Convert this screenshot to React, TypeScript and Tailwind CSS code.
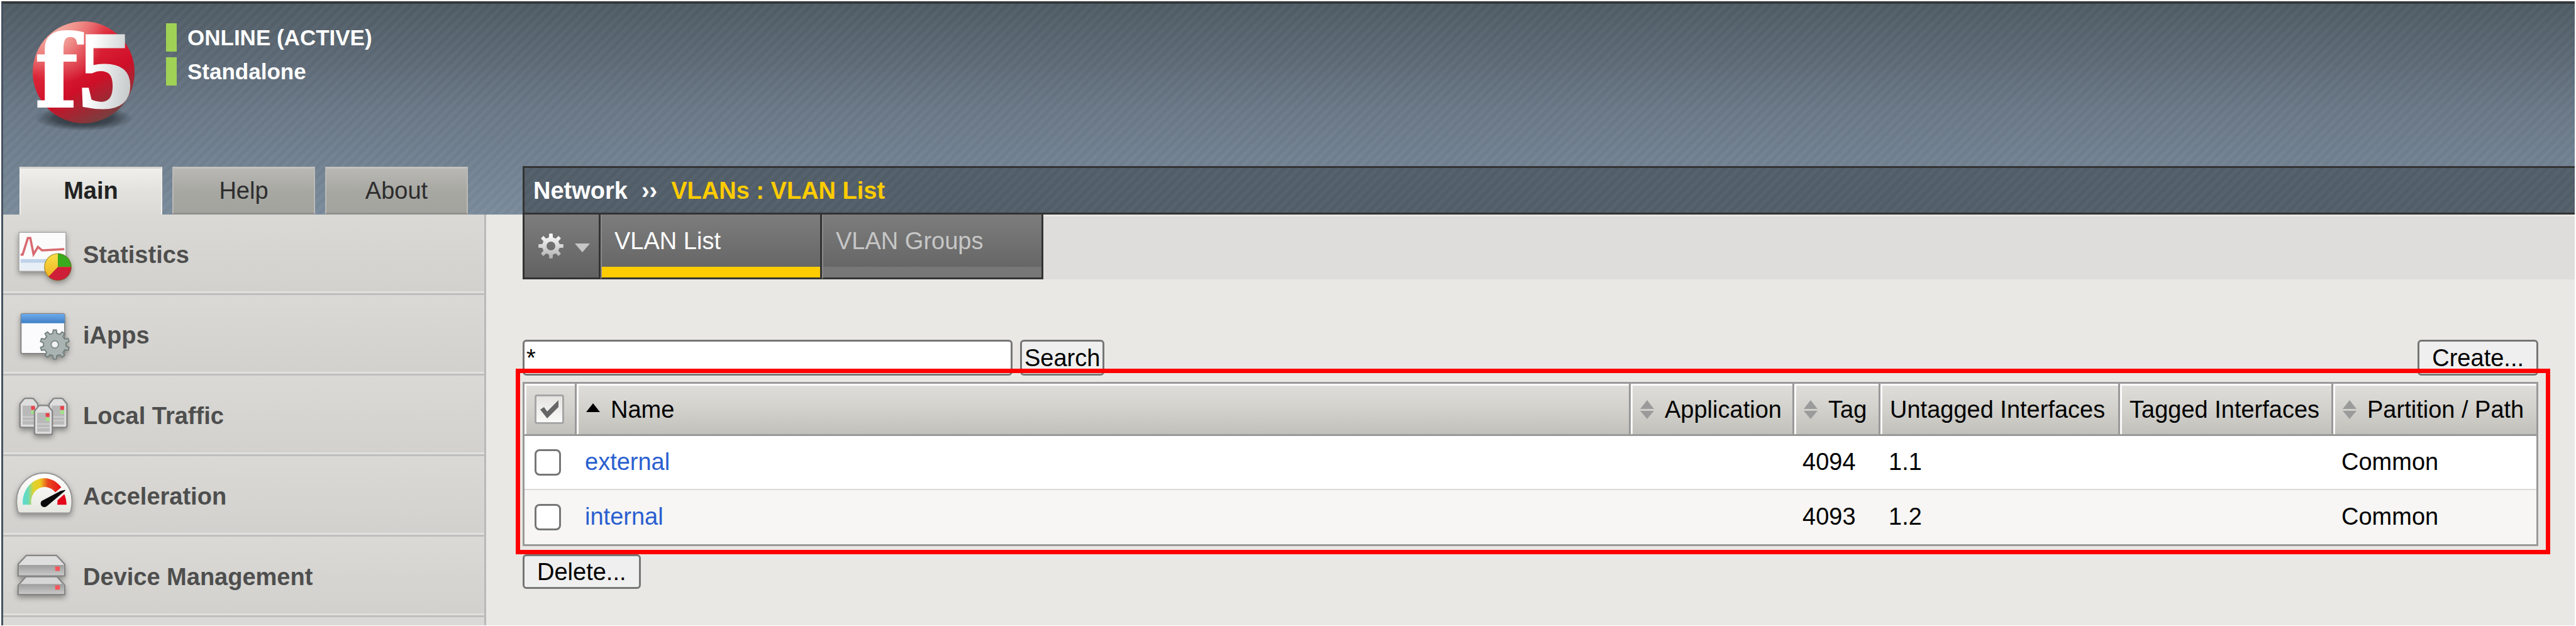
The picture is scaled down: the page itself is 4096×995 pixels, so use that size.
import React from "react";

function gearPath(cx: number, cy: number, outer: number, inner: number, teeth: number, hole: number) {
  const step = (Math.PI * 2) / teeth;
  const point = (r: number, a: number) => `${(cx + r * Math.sin(a)).toFixed(1)} ${(cy - r * Math.cos(a)).toFixed(1)}`;
  let d = "";
  for (let i = 0; i < teeth; i++) {
    const a = i * step;
    d += `${i === 0 ? "M" : "L"}${point(inner, a - step * 0.28)} L${point(outer, a - step * 0.17)} L${point(outer, a + step * 0.17)} L${point(inner, a + step * 0.28)} `;
  }
  d += `Z M${cx + hole} ${cy} A${hole} ${hole} 0 1 0 ${cx - hole} ${cy} A${hole} ${hole} 0 1 0 ${cx + hole} ${cy} Z`;
  return d;
}

const SHADOW = "drop-shadow-[0_4px_4px_rgba(0,0,0,0.35)]";
const ICON = "h-[122px] w-24 shrink-0 " + SHADOW;

function StatisticsIcon() {
  return (
    <svg viewBox="75 10 298 379" className={ICON} aria-hidden="true">
      <defs>
        <linearGradient id="pieYellow" x1="0" y1="0" x2="0" y2="1">
          <stop offset="0" stopColor="#f8e04a" />
          <stop offset="1" stopColor="#eeac1c" />
        </linearGradient>
      </defs>
      <rect x="94" y="98" width="232" height="192" fill="#fbfbfc" stroke="#a2a2a2" strokeWidth="4" />
      <rect x="100" y="232" width="220" height="54" fill="#e9eff6" />
      <rect x="102" y="230" width="130" height="18" fill="#bfd3ea" />
      <path d="M102 208 H112 L138 126 H150 L166 206 L188 170 L208 187 L318 181" fill="none" stroke="#d8696f" strokeWidth="11" />
      <circle cx="286" cy="269" r="67" fill="url(#pieYellow)" />
      <path d="M286 269 V202 A67 67 0 0 1 353 269 Z" fill="#3aab1c" />
      <path d="M286 269 H353 A67 67 0 0 1 240 317 Z" fill="#cf1f38" />
      <circle cx="286" cy="269" r="66" fill="none" stroke="#5a4a20" strokeOpacity="0.45" strokeWidth="4" />
    </svg>
  );
}

function IAppsIcon() {
  return (
    <svg viewBox="75 408 298 379" className={ICON} aria-hidden="true">
      <defs>
        <linearGradient id="winBlue" x1="0" y1="0" x2="0" y2="1">
          <stop offset="0" stopColor="#6cacec" />
          <stop offset="1" stopColor="#3f7fc4" />
        </linearGradient>
      </defs>
      <rect x="104" y="500" width="216" height="197" rx="8" fill="#fbfbfd" stroke="#858585" strokeWidth="6" />
      <path d="M104 547 V510 Q104 501 113 501 H311 Q320 501 320 510 V547 Z" fill="url(#winBlue)" />
      <path d={gearPath(271, 652, 72, 56, 10, 18)} fill="#a9b4b2" stroke="#74807e" strokeWidth="6" fillRule="evenodd" />
      <circle cx="271" cy="652" r="17" fill="#f2f2f4" stroke="#8a9694" strokeWidth="4" />
    </svg>
  );
}

function Tower({ x, y }: { x: number; y: number }) {
  return (
    <g>
      <path
        d={`M${x} ${y + 28} L${x + 20} ${y + 3} Q${x + 24} ${y} ${x + 30} ${y} H${x + 58} Q${x + 64} ${y} ${x + 68} ${y + 3} L${x + 88} ${y + 28} V${y + 136} Q${x + 88} ${y + 144} ${x + 80} ${y + 144} H${x + 8} Q${x} ${y + 144} ${x} ${y + 136} Z`}
        fill="#dedede"
        stroke="#848484"
        strokeWidth="7"
      />
      <rect x={x + 13} y={y + 36} width="62" height="94" fill="#b9b9b9" />
      <path d={`M${x + 13} ${y + 92} H${x + 75} M${x + 13} ${y + 110} H${x + 75}`} stroke="#d2d2d2" strokeWidth="5" />
      <rect x={x + 55} y={y + 38} width="19" height="19" fill="#e8444a" />
      <rect x={x + 55} y={y + 60} width="19" height="17" fill="#a2e286" />
    </g>
  );
}

function LocalTrafficIcon() {
  return (
    <svg viewBox="75 -64 298 379" className={ICON} aria-hidden="true">
      <Tower x={99} y={48} />
      <Tower x={243} y={48} />
      <Tower x={171} y={83} />
    </svg>
  );
}

function AccelerationIcon() {
  return (
    <svg viewBox="75 334 298 379" className={ICON} aria-hidden="true">
      <defs>
        <linearGradient id="dial" x1="0" y1="0" x2="1" y2="0">
          <stop offset="0" stopColor="#58dcd0" />
          <stop offset="0.14" stopColor="#6cd9b8" />
          <stop offset="0.28" stopColor="#dfd32c" />
          <stop offset="0.45" stopColor="#eccb22" />
          <stop offset="0.65" stopColor="#e84a1e" />
          <stop offset="1" stopColor="#e6101c" />
        </linearGradient>
        <linearGradient id="dialFace" x1="0" y1="0" x2="0" y2="1">
          <stop offset="0" stopColor="#ffffff" />
          <stop offset="1" stopColor="#e6e6e0" />
        </linearGradient>
      </defs>
      <path d="M98 615 Q90 615 87 600 Q82 582 82 554 A137 137 0 0 1 356 554 Q356 582 351 600 Q348 615 340 615 Z" fill="url(#dialFace)" stroke="#979797" strokeWidth="6" />
      <path d="M113 574 A107 120 0 0 1 303 488 L274 513 A68 74 0 0 0 155 574 Z" fill="url(#dial)" />
      <path d="M283 574 Q285 556 284 552 L318 522 Q328 544 329 574 Z" fill="#e3071b" />
      <path d="M324 500 Q322 506 314 512 L233 580 A18 18 0 1 1 206 555 L300 506 Z" fill="#0a0a0a" />
    </svg>
  );
}

function DeviceIcon() {
  return (
    <svg viewBox="75 732 298 379" className={ICON} aria-hidden="true">
      <defs>
        <linearGradient id="deviceFace" x1="0" y1="0" x2="0" y2="1">
          <stop offset="0" stopColor="#9c9c9c" />
          <stop offset="1" stopColor="#c8c8c8" />
        </linearGradient>
      </defs>
      <path d="M90 972 L128 930 H282 L320 972 V1018 H90 Z" fill="#d6d6d6" stroke="#858585" strokeWidth="7" strokeLinejoin="round" />
      <rect x="94" y="966" width="222" height="48" fill="url(#deviceFace)" />
      <rect x="273" y="972" width="23" height="22" fill="#f5565c" />
      <path d="M90 868 L130 825 H280 L320 868 V926 H90 Z" fill="#dedede" stroke="#858585" strokeWidth="7" strokeLinejoin="round" />
      <rect x="94" y="872" width="222" height="50" fill="url(#deviceFace)" />
      <rect x="273" y="879" width="23" height="22" fill="#f5565c" />
    </svg>
  );
}

function Logo() {
  return (
    <svg viewBox="0 0 182 184" className="h-[184px] w-[182px] shrink-0 overflow-visible" role="img" aria-label="F5">
      <defs>
        <linearGradient id="ball" x1="0.25" y1="0.05" x2="0.75" y2="0.95">
          <stop offset="0" stopColor="#ee8880" />
          <stop offset="0.3" stopColor="#dc2638" />
          <stop offset="0.62" stopColor="#cf0f28" />
          <stop offset="1" stopColor="#74403f" />
        </linearGradient>
        <radialGradient id="shine" cx="0.25" cy="0.16" r="0.45">
          <stop offset="0" stopColor="#f6b8ac" stopOpacity="0.85" />
          <stop offset="1" stopColor="#f6b8ac" stopOpacity="0" />
        </radialGradient>
        <radialGradient id="ballShadow">
          <stop offset="0" stopColor="#20262c" stopOpacity="0.9" />
          <stop offset="0.6" stopColor="#20262c" stopOpacity="0.6" />
          <stop offset="1" stopColor="#20262c" stopOpacity="0" />
        </radialGradient>
        <linearGradient id="five" x1="0" y1="0" x2="1" y2="0.3">
          <stop offset="0.3" stopColor="#ffffff" />
          <stop offset="1" stopColor="#c9cdce" />
        </linearGradient>
      </defs>
      <ellipse cx="91" cy="160" rx="78" ry="20" fill="url(#ballShadow)" />
      <circle cx="91" cy="87" r="81" fill="url(#ball)" />
      <circle cx="91" cy="87" r="81" fill="url(#shine)" />
      <text x="13" y="142" fontFamily="DejaVu Serif" fontWeight="700" fontSize="160" fill="#ffffff" stroke="#ffffff" strokeWidth="2">f</text>
      <text x="83" y="142" fontFamily="Liberation Serif" fontWeight="700" fontSize="174" fill="url(#five)" stroke="url(#five)" strokeWidth="3">5</text>
    </svg>
  );
}

function SortIcon() {
  return (
    <svg viewBox="0 0 22 30" className="h-[30px] w-[22px] shrink-0" aria-hidden="true">
      <path d="M11 0 L22 14 H0 Z M0 17 H22 L11 30 Z" fill="#9b9b9b" />
    </svg>
  );
}

function SortedIcon() {
  return (
    <svg viewBox="0 0 22 30" className="h-[30px] w-[22px] shrink-0" aria-hidden="true">
      <path d="M11 5 L22 19 H0 Z" fill="#000" />
    </svg>
  );
}

const navItems = [
  { label: "Statistics", Icon: StatisticsIcon },
  { label: "iApps", Icon: IAppsIcon },
  { label: "Local Traffic", Icon: LocalTrafficIcon },
  { label: "Acceleration", Icon: AccelerationIcon },
  { label: "Device Management", Icon: DeviceIcon },
];

const vlans = [
  { name: "external", tag: "4094", untagged: "1.1", partition: "Common" },
  { name: "internal", tag: "4093", untagged: "1.2", partition: "Common" },
];

const columns = [
  { label: "Name", sort: "asc" },
  { label: "Application", sort: "both" },
  { label: "Tag", sort: "both" },
  { label: "Untagged Interfaces", sort: "" },
  { label: "Tagged Interfaces", sort: "" },
  { label: "Partition / Path", sort: "both" },
];

const STRIPES =
  "bg-[repeating-linear-gradient(135deg,rgba(255,255,255,0.025)_0px,rgba(255,255,255,0.025)_5px,rgba(0,0,0,0.015)_6px,rgba(0,0,0,0.015)_11px)]";
const BUTTON = "rounded-md border-3 border-[#767676] bg-[#efefef] text-black";
const SIDE_TAB = "flex w-[227px] items-center justify-center border-x-2 border-t-3";
const IDLE_TAB =
  " border-x-[#bbbab6] border-t-[#c3c2be] border-b-3 border-b-[#8f8f8c] bg-linear-to-b from-[#b9b8b4] via-[#a8a8a3] to-[#a3a39e] text-[#2d2d2d]";
const MENU_TAB =
  "flex h-[103px] w-[352px] flex-col border-r-3 border-b-3 border-l-2 border-[#333] border-l-[#8a8a8a] bg-linear-to-b from-[#7d7d7d] to-[#626262]";
const HEAD_CELL =
  "h-[83px] border-b-3 border-[#999] bg-linear-to-b from-[#dfdeda] via-[#d2d1cc] to-[#c1c0bb] p-0 font-normal";
const HEAD_INNER = "flex h-20 items-center gap-[17px] border-t-3 border-l-3 border-white/90 pb-[2px] pl-3";

export default function App() {
  return (
    <div className="flex min-h-screen flex-col bg-white px-[2px] pt-[2px] pb-px font-['Liberation_Sans',Arial,sans-serif] text-[38px] leading-[44px] text-black">
      <div className="flex flex-1 flex-col border-t-4 border-l-3 border-t-[#35383b] border-l-[#46525f] bg-[#e9e8e4]">
        <header className="bg-linear-to-b from-[#505c65] via-[#6a7887] to-[#7a8b9b]">
          <div className={"flex items-end " + STRIPES}>
            <div className="flex w-[826px] shrink-0 flex-col">
              <div className="flex h-[259px] items-start gap-10 pt-[22px] pl-[37px]">
                <Logo />
                <div className="flex flex-col gap-[9px] pt-[9px] text-[35px] leading-[45px] font-bold text-white">
                  <div className="border-l-17 border-[#9fd255] pl-[17px]">ONLINE (ACTIVE)</div>
                  <div className="border-l-17 border-[#9fd255] pl-[17px]">Standalone</div>
                </div>
              </div>
              <nav className="flex h-[76px] gap-4 pl-[26px]" aria-label="Sections">
                <button className={SIDE_TAB + " border-x-[#f0efec] border-t-[#d5d4d0] bg-linear-to-b from-[#f0efec] via-[#e2e1dd] to-[#dbdad6] pb-[3px] font-bold text-[#222]"}>Main</button>
                <button className={SIDE_TAB + IDLE_TAB}>Help</button>
                <button className={SIDE_TAB + IDLE_TAB}>About</button>
              </nav>
            </div>
            <div className="flex-1 border-y-3 border-l-3 border-[#333] bg-[#525e69]">
              <h1 className={"flex h-[71px] items-center gap-[22px] pl-[14px] font-bold text-white " + STRIPES}>
                <span>Network</span>
                <span>››</span>
                <span className="text-[#ffcc00]">VLANs : VLAN List</span>
              </h1>
            </div>
          </div>
        </header>

        <div className="flex flex-1">
          <aside className="flex w-[768px] shrink-0 flex-col border-r-3 border-[#b9b9b9]">
            {navItems.map(({ label, Icon }) => (
              <a key={label} href="#" className="block border-b-3 border-[#bebebe] font-bold text-[#4e4e4e]">
                <span className="flex h-[125px] items-start gap-3 border-b-3 border-[#e1e0dc] bg-linear-to-b from-[#dad9d5] to-[#d2d1cd] pl-[19px]">
                  <Icon />
                  <span className="self-center pt-[5px]">{label}</span>
                </span>
              </a>
            ))}
            <div className="flex-1 bg-[#dad9d5]" />
          </aside>

          <main className="flex min-w-0 flex-1 flex-col">
            <div className="flex pl-[58px]">
              <button aria-label="Options" className="flex h-[103px] w-[124px] items-center gap-4 border-x-3 border-b-3 border-[#333] bg-linear-to-b from-[#7d7d7d] to-[#626262] pl-5">
                <svg viewBox="0 0 44 44" className="h-11 w-11" aria-hidden="true">
                  <defs>
                    <linearGradient id="gearFill" x1="0" y1="0" x2="0" y2="1">
                      <stop offset="0" stopColor="#ffffff" />
                      <stop offset="1" stopColor="#b0b0b0" />
                    </linearGradient>
                  </defs>
                  <path d={gearPath(22, 22, 20, 14, 8, 7)} fill="url(#gearFill)" fillRule="evenodd" />
                </svg>
                <svg viewBox="0 0 24 20" className="h-5 w-6" aria-hidden="true">
                  <path d="M0 6 H24 L12 20 Z" fill="#c6c6c6" />
                </svg>
              </button>
              <a href="#" className={MENU_TAB + " text-white"}>
                <span className="flex flex-1 items-center pl-5">VLAN List</span>
                <span className="h-[17px] bg-[#ffcc00]" />
              </a>
              <a href="#" className={MENU_TAB + " text-[#c6c6c6]"}>
                <span className="flex flex-1 items-center pl-5">VLAN Groups</span>
                <span className="h-[17px] bg-[#777]" />
              </a>
              <div className="flex-1 border-t-3 border-[#e9e8e4] bg-[#dedddb]" />
            </div>

            <div className="flex flex-col pt-24 pr-[58px] pl-[58px]">
              <div className="flex h-[57px] items-stretch gap-3">
                <input aria-label="Search VLANs" defaultValue="*" className="w-[779px] rounded-md border-3 border-[#767676] bg-white pl-[3px] outline-none" />
                <button className={BUTTON + " px-1"}>Search</button>
                <button className={BUTTON + " ml-auto px-5"}>Create...</button>
              </div>

              <div className="relative mt-[10px]">
                <div className="border-3 border-[#999]">
                  <table className="w-full table-fixed border-separate border-spacing-0 text-left">
                    <colgroup>
                      <col className="w-[83px]" />
                      <col />
                      <col className="w-[260px]" />
                      <col className="w-[137px]" />
                      <col className="w-[381px]" />
                      <col className="w-[339px]" />
                      <col className="w-[323px]" />
                    </colgroup>
                    <thead>
                      <tr>
                        <th className={HEAD_CELL + " border-r-3"}>
                          <div className={HEAD_INNER}>
                            <span className="relative ml-[1px] block h-[47px] w-[47px]">
                              <input type="checkbox" defaultChecked aria-label="Select all" className="block h-[47px] w-[47px] appearance-none rounded-sm border-3 border-[#a6a6a6] bg-linear-to-b from-[#e4e3df] to-[#fafafa]" />
                              <svg viewBox="0 0 47 47" className="pointer-events-none absolute inset-0" aria-hidden="true">
                                <path d="M9 24 L15 20 L20 27 L38 9 V20 L20 38 Z" fill="#666" />
                              </svg>
                            </span>
                          </div>
                        </th>
                        {columns.map(({ label, sort }, i) => (
                          <th key={label} className={HEAD_CELL + (i < columns.length - 1 ? " border-r-3" : "")}>
                            <div className={HEAD_INNER}>
                              {sort === "asc" && <SortedIcon />}
                              {sort === "both" && <SortIcon />}
                              <span className="whitespace-nowrap">{label}</span>
                            </div>
                          </th>
                        ))}
                      </tr>
                    </thead>
                    <tbody>
                      {vlans.map((vlan, i) => (
                        <tr key={vlan.name} className={i === 0 ? "h-[86px] bg-white *:border-b-2 *:border-[#dadada]" : "h-[86px] bg-[#f7f6f4]"}>
                          <td className="p-0 pl-4">
                            <input type="checkbox" aria-label={"Select " + vlan.name} className="block h-[42px] w-[42px] appearance-none rounded-lg border-3 border-[#767676] bg-white" />
                          </td>
                          <td className="p-0 pb-[2px] pl-[13px]">
                            <a href="#" className="text-[#2a5fd0]">{vlan.name}</a>
                          </td>
                          <td className="p-0" />
                          <td className="p-0 pb-[2px] pl-[13px]">{vlan.tag}</td>
                          <td className="p-0 pb-[2px] pl-[13px]">{vlan.untagged}</td>
                          <td className="p-0" />
                          <td className="p-0 pb-[2px] pl-[13px]">{vlan.partition}</td>
                        </tr>
                      ))}
                    </tbody>
                  </table>
                </div>
                <div className="pointer-events-none absolute -top-[21px] -right-[19px] -bottom-[13px] -left-[11px] border-7 border-[#ff0000]" />
              </div>

              <button className={BUTTON + " mt-[13px] h-[55px] self-start px-5"}>Delete...</button>
            </div>
          </main>
        </div>
      </div>
    </div>
  );
}
